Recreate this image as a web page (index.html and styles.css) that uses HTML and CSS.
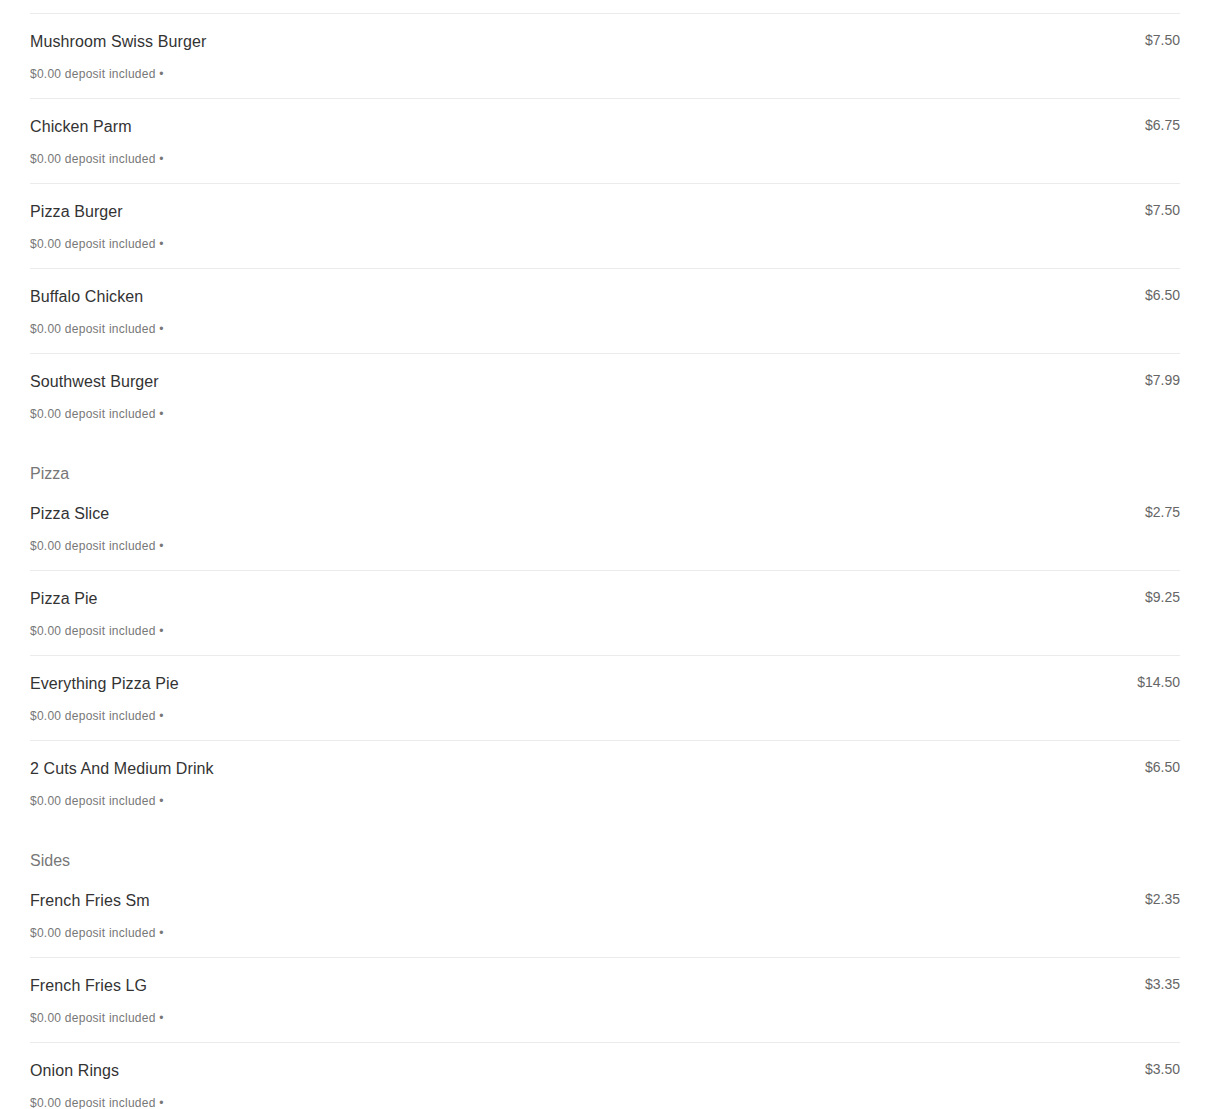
FILE: index.html
```html
<!DOCTYPE html>
<html lang="en">
<head>
  <meta charset="UTF-8" />
  <meta name="viewport" content="width=device-width, initial-scale=1.0"/>
  <title>Menu</title>
  <link rel="stylesheet" href="styles.css">
</head>
<body>
  <div class="menu">

    <div class="section first">
      <div class="item">
        <div class="info">
          <div class="name">Mushroom Swiss Burger</div>
          <div class="deposit">$0.00 deposit included •</div>
        </div>
        <div class="price">$7.50</div>
      </div>
      <div class="item">
        <div class="info">
          <div class="name">Chicken Parm</div>
          <div class="deposit">$0.00 deposit included •</div>
        </div>
        <div class="price">$6.75</div>
      </div>
      <div class="item">
        <div class="info">
          <div class="name">Pizza Burger</div>
          <div class="deposit">$0.00 deposit included •</div>
        </div>
        <div class="price">$7.50</div>
      </div>
      <div class="item">
        <div class="info">
          <div class="name">Buffalo Chicken</div>
          <div class="deposit">$0.00 deposit included •</div>
        </div>
        <div class="price">$6.50</div>
      </div>
      <div class="item">
        <div class="info">
          <div class="name">Southwest Burger</div>
          <div class="deposit">$0.00 deposit included •</div>
        </div>
        <div class="price">$7.99</div>
      </div>
    </div>

    <div class="section">
      <h3 class="section-title">Pizza</h3>
      <div class="item">
        <div class="info">
          <div class="name">Pizza Slice</div>
          <div class="deposit">$0.00 deposit included •</div>
        </div>
        <div class="price">$2.75</div>
      </div>
      <div class="item">
        <div class="info">
          <div class="name">Pizza Pie</div>
          <div class="deposit">$0.00 deposit included •</div>
        </div>
        <div class="price">$9.25</div>
      </div>
      <div class="item">
        <div class="info">
          <div class="name">Everything Pizza Pie</div>
          <div class="deposit">$0.00 deposit included •</div>
        </div>
        <div class="price">$14.50</div>
      </div>
      <div class="item">
        <div class="info">
          <div class="name">2 Cuts And Medium Drink</div>
          <div class="deposit">$0.00 deposit included •</div>
        </div>
        <div class="price">$6.50</div>
      </div>
    </div>

    <div class="section">
      <h3 class="section-title">Sides</h3>
      <div class="item">
        <div class="info">
          <div class="name">French Fries Sm</div>
          <div class="deposit">$0.00 deposit included •</div>
        </div>
        <div class="price">$2.35</div>
      </div>
      <div class="item">
        <div class="info">
          <div class="name">French Fries LG</div>
          <div class="deposit">$0.00 deposit included •</div>
        </div>
        <div class="price">$3.35</div>
      </div>
      <div class="item">
        <div class="info">
          <div class="name">Onion Rings</div>
          <div class="deposit">$0.00 deposit included •</div>
        </div>
        <div class="price">$3.50</div>
      </div>
    </div>

  </div>
</body>
</html>
```

FILE: styles.css
```css
* {
  box-sizing: border-box;
  font-family: 'Liberation Sans', Arial, sans-serif;
}

body {
  margin: 0;
  background: #fff;
}

.menu {
  padding: 13px 30px 0;
}

.section.first {
  border-top: 1px solid #ebebeb;
}

.section-title {
  margin: 26px 0 2px;
  font-size: 16px;
  line-height: 20px;
  font-weight: normal;
  color: #777;
}

.item {
  display: flex;
  justify-content: space-between;
  align-items: flex-start;
  padding: 17px 0 16px;
  border-bottom: 1px solid #ebebeb;
}

.item:last-child {
  border-bottom: none;
}

.name {
  margin-top: 1px;
  font-size: 16px;
  line-height: 20px;
  letter-spacing: 0.1px;
  color: #333;
}

.deposit {
  margin-top: 14px;
  font-size: 12px;
  line-height: 16px;
  letter-spacing: 0.25px;
  color: #777;
}

.price {
  font-size: 14px;
  line-height: 18px;
  color: #666;
}
```
